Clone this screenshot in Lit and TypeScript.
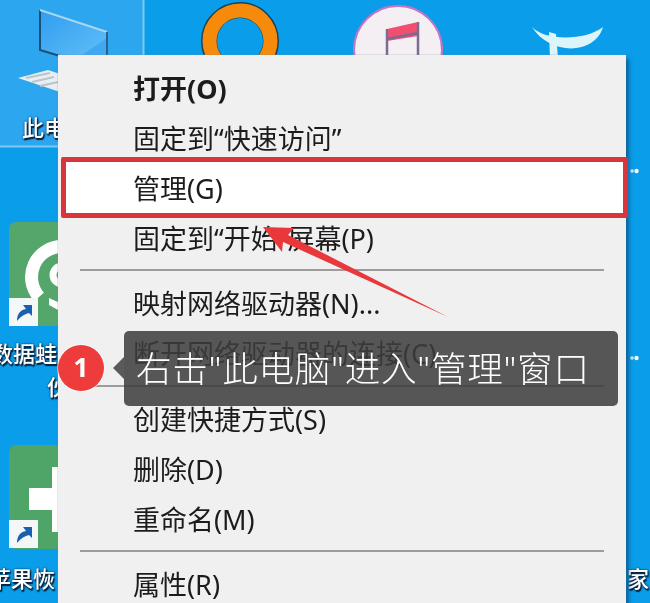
import { LitElement, html, css, svg } from "lit";
import { customElement } from "lit/decorators.js";

const shortcut = svg`<rect width="29" height="28" fill="#f4f7f8"/><path d="M8 23c0-7 3-11 9-12l-3-4h9v11l-3-3c-4 1-8 3-12 8z" fill="#1c5fae"/>`;

@customElement("app-root")
export class AppRoot extends LitElement {
  static styles = css`
    :host { display: block; width: 650px; height: 603px; }
    .desk {
      position: relative; width: 650px; height: 603px; overflow: hidden;
      background: #0a9dea;
      font-family: "Noto Sans", "Noto Sans CJK SC", sans-serif;
      filter: blur(0.45px);
    }
    .art { position: absolute; inset: 0; width: 650px; height: 603px; }
    .label {
      position: absolute; font-size: 22px; font-weight: 500; line-height: 28px; color: #fff; white-space: nowrap;
      text-shadow: 1px 1px 2px #0b2540, 0 0 2px #0b2540, 1px 2px 1px #0b2540;
    }
    .l1 { left: 22px; top: 113px; }
    .l2 { left: -9px; top: 339px; }
    .l3 { left: 47px; top: 372px; }
    .l4 { left: -11px; top: 564px; }
    .l5 { left: 627px; top: 564px; }
    .menu {
      position: absolute; z-index: 0; left: 58px; top: 55px; width: 568px; height: 560px;
      box-sizing: border-box; padding: 9px 22px 0 75px;
      background: #f0f0f0; color: #1c1c1c;
      display: flex; flex-direction: column;
      box-shadow: 3px 4px 4px rgba(10, 50, 90, .55), 0 0 1px #8a9aa5;
    }
    .row { height: 50px; line-height: 50px; font-size: 27px; white-space: nowrap; flex: none; }
    .bold { font-weight: 700; }
    .sep { height: 2px; background: #9c9c9c; margin: 5px 0 8px -53px; flex: none; }
    .sep.b { margin-bottom: 8px; margin-top: 6px; }
    .sep.c { margin-top: 5px; margin-bottom: 8px; }
    .picked { position: relative; }
    .picked::before {
      content: ""; position: absolute; z-index: -1; left: -72px; top: -7px; width: 567px; height: 61px;
      box-sizing: border-box; border: 5px solid #d9363c; border-radius: 2px; background: #fff;
    }
    .tip {
      position: absolute; left: 124px; top: 331px; width: 494px; height: 75px; box-sizing: border-box;
      border-radius: 5px; background: rgba(60, 60, 60, .86);
      color: #fff; font-size: 35.6px; font-weight: 300; letter-spacing: 0.7px;
      line-height: 75px; padding-left: 12px; white-space: nowrap;
    }
    .tip::before {
      content: ""; position: absolute; left: -11px; top: 26px;
      border: 11px solid transparent; border-left: 0; border-right-color: #5a5a5a;
    }
    .badge {
      position: absolute; left: 58px; top: 345px; width: 46px; height: 46px; border-radius: 50%;
      background: #ee3b3b; color: #fff; font-size: 27px; font-weight: 700; line-height: 44px; text-align: center;
      box-shadow: 0 0 0 1px rgba(255, 255, 255, .5);
    }
  `;

  render() {
    return html`<div class="desk">
      <svg class="art" viewBox="0 0 650 603">
        <defs>
          <linearGradient id="scr" x1="0" y1="0" x2="1" y2="1">
            <stop offset="0" stop-color="#2f9df0"/><stop offset="1" stop-color="#63c0f7"/>
          </linearGradient>
        </defs>
        <rect x="0" y="0" width="143" height="146" fill="#2ba6ef"/>
        <path d="M143.5 0V146.5H0" fill="none" stroke="#7cc9f5" stroke-width="2"/>
        <path d="M40 10L107 32V60H75L40 50Z" fill="url(#scr)"/>
        <path d="M75 60L107 38V60Z" fill="#2f9df0" opacity=".6"/>
        <path d="M40 10V50L60 56" fill="none" stroke="#1d4e78" stroke-width="2"/>
        <path d="M40 10L107 32" fill="none" stroke="#a9d6ec" stroke-width="2"/>
        <path d="M107 32V58" fill="none" stroke="#2a628e" stroke-width="2"/>
        <path d="M18 78L48 70L60 74V92Z" fill="#e8eef1"/>
        <path d="M26 78L50 73M32 82L54 77M40 86L58 82" stroke="#bcc5ca" stroke-width="2"/>

        <circle cx="240" cy="41" r="31" fill="none" stroke="#1f3f55" stroke-width="16"/>
        <circle cx="240" cy="41" r="30.5" fill="none" stroke="#f68a0a" stroke-width="14"/>

        <circle cx="398" cy="50" r="44" fill="#f4eff3" stroke="#c774c4" stroke-width="2"/>
        <path d="M387 29L418 22V36L387 41Z" fill="#f24f70"/>
        <path d="M387 29V60M418 22V60M387 39L418 33" fill="none" stroke="#7b6a92" stroke-width="2.5"/>

        <path d="M532 27C545 41 585 41 603 27C595 55 550 56 532 27Z" fill="#dbf5fb"/>
        <path d="M549 32L556 34L558 58H550Z" fill="#dbf5fb"/>
        <circle cx="632" cy="171" r="1.8" fill="#cfe9f5"/><circle cx="636.5" cy="171" r="2.2" fill="#fff"/>
        <circle cx="632" cy="358" r="1.8" fill="#cfe9f5"/><circle cx="636.5" cy="358" r="2.2" fill="#fff"/>

        <rect x="9" y="222" width="60" height="104" rx="7" fill="#55a66b"/>
        <path d="M39 297A30.5 30.5 0 0 1 62 246.5H70" fill="none" stroke="#fff" stroke-width="13"/>
        <circle cx="62" cy="275" r="9" fill="none" stroke="#fff" stroke-width="7"/>
        <path d="M49 298L60 303V311L49 305Z" fill="#fff"/>
        <g transform="translate(9 298)">${shortcut}</g>

        <rect x="9" y="445" width="60" height="104" rx="7" fill="#4fa568"/>
        <path d="M29 488H52V467H70V532H52V510H29Z" fill="#fff"/>
        <g transform="translate(9 520)">${shortcut}</g>
      </svg>

      <div class="label l1">此电</div>
      <div class="label l2">数据蛙</div>
      <div class="label l3">伙</div>
      <div class="label l4">苹果恢</div>
      <div class="label l5">家</div>

      <div class="menu">
        <div class="row bold">打开(O)</div>
        <div class="row">固定到“快速访问”</div>
        <div class="row picked">管理(G)</div>
        <div class="row">固定到“开始”屏幕(P)</div>
        <div class="sep"></div>
        <div class="row">映射网络驱动器(N)...</div>
        <div class="row">断开网络驱动器的连接(C)</div>
        <div class="sep b"></div>
        <div class="row">创建快捷方式(S)</div>
        <div class="row">删除(D)</div>
        <div class="row">重命名(M)</div>
        <div class="sep c"></div>
        <div class="row">属性(R)</div>
      </div>

      <svg class="art" viewBox="0 0 650 603">
        <path d="M263 227L294 228L288 235L448 317L283 242L282 252Z" fill="#e8383b"/>
      </svg>

      <div class="tip">右击"此电脑"进入"管理"窗口</div>
      <div class="badge">1</div>
    </div>`;
  }
}
